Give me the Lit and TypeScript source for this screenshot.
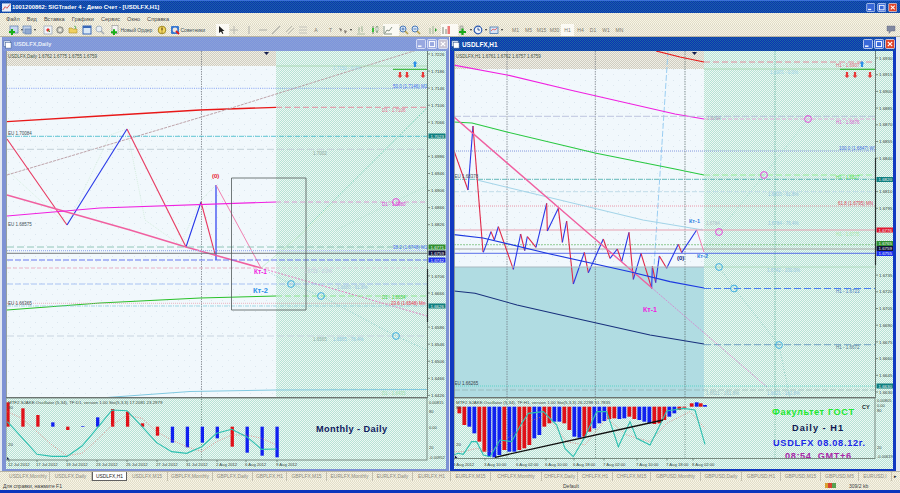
import { LitElement, css, html, svg } from 'lit';
import { customElement } from 'lit/decorators.js';

type Pt = number[];
type Line = { p: Pt[]; c: string; w?: number; d?: string };
type Label = [number, number, string, string, number?, number?];
type Pane = {
  x: number;
  w: number;
  split: number;
  axis: number;
  stripEnd: number;
  strip: string;
  lower?: number;
  axisDark: [number, number];
  ticks: [number, string][];
  tags: [number, string, string][];
  verts: [number, string][];
  lines: Line[];
  labels: Label[];
  rings: [number, number, string][];
  arrows: { up: number; down: number[]; bar: number };
};

const F = '"Liberation Sans", Arial, sans-serif';
const Z = (ox: number, oy: number, pts: Pt[]) => pts.map(([x, y]) => [ox + x / 3, oy + y / 3]);
const H = (y: number, a: number, b: number, c: string, w = 0.8, d = '') => ({ p: [[a, y], [b, y]], c, w, d });

const leftTicks: [number, string][] = [];
for (let i = 0; i < 21; i++) {
  leftTicks.push([54 + i * 17.07, (1.7226 - i * 0.004).toFixed(4)]);
}
const rightTicks: [number, string][] = [];
for (let i = 0; i < 21; i++) {
  rightTicks.push([58 + i * 16.7, (1.693 - i * 0.0015).toFixed(4)]);
}

const leftPane: Pane = {
  x: 6,
  w: 440,
  split: 276,
  axis: 427,
  stripEnd: 66,
  strip: 'USDLFX,Daily  1.6762 1.6775 1.6755 1.6759',
  axisDark: [269, 322],
  ticks: leftTicks,
  tags: [
    [136, '1.7023', '#0f7f7f'],
    [247, '1.6771', '#2f8f2f'],
    [253, '1.6759', '#12123a'],
    [260, '1.6742', '#1c30f0'],
    [306, '1.6626', '#0f7f7f'],
  ],
  verts: [[201.5, '#6a7078']],
  lines: [
    { p: [[7, 170], [67, 225], [110, 135], [127, 129], [145, 220], [180, 245], [201, 200], [216, 185]], c: '#c4e6cc', w: 0.6, d: '1 1' },
    { p: [[306, 228], [427, 108]], c: '#55c8a8', w: 0.7, d: '1.5 1.5' },
    { p: [[336, 230], [427, 186]], c: '#aadcc8', w: 0.6, d: '1.5 1.5' },
    { p: [[261, 268], [291, 284], [321, 296], [396, 336], [427, 350]], c: '#6cc0c0', w: 0.7, d: '1 2' },
    { p: [[261, 268], [306, 230], [336, 200]], c: '#b8e8c0', w: 0.7 },
    H(88.3, 7, 427, '#6a8cf0', 0.8, '1 1.2'),
    { p: [[7, 121.7], [100, 116], [200, 110], [276, 107.3]], c: '#e81818', w: 1.3 },
    H(107.3, 276, 427, '#e87a90', 0.8, '6 3'),
    { p: [[7, 175], [225, 110], [385, 60], [417, 50]], c: '#b89aa0', w: 0.9, d: '3 1' },
    H(136.3, 7, 427, '#38b8c8', 0.8, '5 1 1 1'),
    H(149.3, 7, 427, '#c4d0d8', 1, '7 3'),
    { p: [[7, 139], [67, 225]], c: '#e83860', w: 1.1 },
    { p: [[67, 225], [127, 129]], c: '#2838e8', w: 1.1 },
    { p: [[127, 129], [186, 247]], c: '#e83860', w: 1.1 },
    { p: [[186, 247], [201, 202]], c: '#2838e8', w: 1.1 },
    { p: [[201, 202], [215.5, 256]], c: '#e83860', w: 1.1 },
    { p: [[216, 260], [216, 185]], c: '#3848f0', w: 1.3 },
    { p: [[216, 185], [261, 268]], c: '#f080b0', w: 1 },
    { p: [[7, 195], [130, 230], [186, 247], [261, 268]], c: '#f060a0', w: 1.5 },
    { p: [[261, 268], [427, 316]], c: '#e860b8', w: 0.8, d: '2 1.5' },
    { p: [[7, 216], [100, 208], [276, 202]], c: '#f020e0', w: 1.2 },
    H(202, 276, 427, '#e090d0', 0.8, '5 3'),
    H(66, 276, 427, '#a8d8b0', 0.9),
    H(247, 7, 427, '#78b8a8', 0.8, '7 3'),
    H(250.7, 7, 427, '#a0b4f0', 1.2, '1 1'),
    H(253.3, 7, 427, '#686c70', 0.9),
    H(260, 7, 427, '#5a6cf0', 0.9, '6 2'),
    H(268, 7, 276, '#e8a0b8', 0.8, '4 2'),
    H(268, 276, 427, '#dcc8dc', 0.8, '4 2'),
    H(284, 7, 427, '#98b4f0', 0.8, '6 2'),
    { p: [[7, 310], [100, 303], [200, 298], [276, 296]], c: '#28c028', w: 1 },
    H(296, 276, 427, '#80e880', 0.8, '6 3'),
    H(303.3, 7, 427, '#e898a8', 0.7, '1 1'),
    H(306, 7, 427, '#80c8d8', 0.7, '4 1 1 1'),
    H(336, 7, 427, '#c8d4e0', 1, '7 3'),
    H(389.3, 330, 427, '#b0e0d0', 0.8, '7 3'),
    { p: [[100, 398], [190, 391.5], [276, 390], [427, 389.5]], c: '#80c8e0', w: 1 },
    { p: [[231.5, 178], [306, 178], [306, 310], [231.5, 310], [231.5, 178]], c: '#505858', w: 0.8 },
  ],
  labels: [
    [8, 135, 'EU 1.70084', '#405058'],
    [8, 226, 'EU 1.68575', '#405058'],
    [8, 304.5, 'EU 1.66365', '#405058'],
    [393, 88, '50.0 (1.7146) M1', '#4068f0'],
    [382, 111.5, 'D1 - 1.7106', '#e87090'],
    [333, 70, '1.7150 - 0.0%', '#a0d4e8'],
    [313, 155, '1.7002', '#90a8a0'],
    [382, 206, 'D1 - 1.6980', '#e040d8'],
    [393, 249, '38.2 (1.6748) M1', '#4068f0'],
    [304, 273, '1.6725 - 0.0%', '#c0c8e0'],
    [337, 289, '1.6680 - 61.8%', '#a0c4e0'],
    [382, 299, 'D1 - 1.6654', '#40d040'],
    [391, 304.5, '23.6 (1.6548) Mn', '#e83858'],
    [313, 341, '1.6565', '#90b0a8'],
    [333, 341, '1.6565 - 76.4%', '#90c8e0'],
    [382, 395, 'D1 - 1.6435', '#a0e0b0'],
    [212, 178, '(0)', '#e81830', 700, 6],
    [254, 274, 'Кт-1', '#f020e0', 700, 6.5],
    [253, 293, 'Кт-2', '#2c90e8', 700, 7.5],
  ],
  rings: [
    [396, 202, '#e838d8'],
    [291, 284, '#30a8e0'],
    [321, 296, '#30a8e0'],
    [396, 336, '#30a8e0'],
  ],
  arrows: { up: 415, down: [400, 407, 423], bar: 393 },
};

const zig = Z(450, 220, [
  [100, 97], [123, 35], [133, 60], [145, 20], [190, 148], [212, 42], [224, 92], [232, 50], [258, 82], [290, -50],
  [292, 33], [325, -35], [337, 67], [350, 3], [370, 192], [403, 97], [415, 158], [460, 57], [480, 115], [502, 87],
  [515, 125], [537, 37], [550, 178], [573, 100], [605, 205], [607, 138], [617, 188], [628, 108], [650, 145], [685, 73],
  [695, 98], [740, 30],
]);
const zigLines: Line[] = [
  { p: [[453, 148], [468, 190]], c: '#e02848', w: 1.1 },
  { p: [[468, 190], [473, 126]], c: '#2838e8', w: 1.1 },
  { p: [[473, 126], [483, 252]], c: '#e02848', w: 1.1 },
];
zig.forEach((pt, i) => {
  if (i < zig.length - 1) {
    zigLines.push({ p: [pt, zig[i + 1]], c: i % 2 ? '#e02848' : '#2838e8', w: 1.1 });
  }
});
zigLines.push({ p: [[696.7, 230], [704, 252]], c: '#f080b0', w: 1 });

const rightPane: Pane = {
  x: 454,
  w: 439,
  split: 704,
  axis: 875,
  stripEnd: 69,
  strip: 'USDLFX,H1  1.6761 1.6762 1.6757 1.6759',
  lower: 267,
  axisDark: [158, 265],
  ticks: rightTicks,
  tags: [
    [179.5, '1.6820', '#0f7f7f'],
    [230, '1.6776', '#e01830'],
    [243.5, '1.6765', '#2f8f2f'],
    [248.5, '1.6759', '#12123a'],
    [253.5, '1.6755', '#1c30f0'],
    [386, '1.6630', '#0f7f7f'],
  ],
  verts: [
    [507, '#6a7078'],
    [595.3, '#6a7078'],
    [685, '#5a6a68'],
    [775, '#58b098'],
  ],
  lines: [
    { p: [[704, 250], [764, 175], [808, 119]], c: '#8cd8c8', w: 0.7, d: '1 2' },
    { p: [[719, 267], [734, 288], [779, 345], [790, 398]], c: '#70c0b8', w: 0.7, d: '1 2' },
    { p: [[668, 51], [657, 220], [654, 267]], c: '#90c8f0', w: 0.9, d: '6 2' },
    { p: [[656, 51], [680, 57], [704, 62]], c: '#e81818', w: 1.2 },
    H(62, 704, 875, '#e87a90', 0.8, '6 3'),
    H(69, 704, 875, '#a8d8b0', 0.9),
    { p: [[453, 65], [507, 75], [570, 90], [675, 114], [704, 119]], c: '#f020e0', w: 1.2 },
    H(119, 704, 875, '#e8a0d8', 0.8, '4 2'),
    H(116.3, 454, 875, '#b0b8d8', 0.8, '7 2'),
    H(151, 454, 875, '#6c80d8', 0.8, '1 1'),
    { p: [[454, 122], [472, 123], [507, 132], [570, 147], [595, 153], [675, 169], [704, 175]], c: '#28c840', w: 1.1 },
    H(175, 704, 875, '#88f088', 0.8, '6 3'),
    H(179.3, 454, 875, '#40a8a8', 0.8, '5 1 1 1'),
    H(191.7, 454, 875, '#c0dce8', 1, '5 2'),
    H(206, 454, 875, '#e87088', 0.7, '1 1'),
    { p: [[477, 180], [643, 220], [703, 230]], c: '#a4d4e8', w: 1.1 },
    H(230, 454, 875, '#e8a0b0', 1),
    H(244.7, 454, 875, '#68b868', 0.7, '2 1'),
    H(249, 454, 875, '#a8a8a8', 1.2),
    H(253.3, 454, 875, '#4860e8', 0.9),
    ...zigLines,
    { p: [[454, 117], [573, 220], [652, 288]], c: '#f060a0', w: 1.4 },
    { p: [[652, 288], [767, 387]], c: '#e070c8', w: 0.7, d: '2 1' },
    H(267, 454, 704, '#a8b8c0', 1),
    H(267, 704, 875, '#a8d8b8', 0.8),
    { p: [[454, 234.7], [483, 238], [550, 254], [631, 272], [670, 281.7], [704, 288]], c: '#1c38e0', w: 1.2 },
    H(288.5, 704, 875, '#3870f0', 0.9, '7 3'),
    { p: [[454, 291], [475, 293.3], [517, 305], [583, 320], [650, 335], [704, 344]], c: '#18307c', w: 1.1 },
    H(344.7, 704, 875, '#6898c0', 0.9, '7 3'),
    H(386, 454, 875, '#48d0c0', 0.8, '1 1'),
    H(390, 454, 875, '#8aa8a8', 0.6, '6 2'),
  ],
  labels: [
    [836, 67, 'H1 - 1.6907', '#e86880'],
    [770, 74, '1.6901 - 0.0%', '#a0d4e8'],
    [707, 120, '1.6894', '#98a8b8'],
    [836, 124, 'H1 - 1.6876', '#e060d0'],
    [839, 150, '100.0 (1.6847) W1', '#4068e0'],
    [836, 179, 'H1 - 1.6827', '#50e050'],
    [454.5, 178, 'EU 1.68378', '#405058'],
    [768, 196, '1.6810 - 61.8%', '#98c8e0'],
    [838, 205, '61.8 (1.6795) MN', '#e04058'],
    [706, 225, '1.6784', '#b0c0c8'],
    [768, 225, '1.6784 - 76.4%', '#98c8e0'],
    [836, 236, 'H1 - 1.6775', '#a8e8a8'],
    [767, 272, '1.6742 - 100.0%', '#98c8e0'],
    [836, 293, 'H1 - 1.6723', '#4878c0'],
    [836, 349, 'H1 - 1.6672', '#507890'],
    [454.5, 385, 'EU 1.66265', '#304048'],
    [706, 395, '1.6621 - 161.8%', '#98c0c8'],
    [767, 395, '1.6621 - 161.8%', '#98c8e0'],
    [689, 223, 'Кт-1', '#2c80e0', 700, 5.5],
    [697, 258, 'Кт-2', '#2c80e0', 700, 5.5],
    [677, 260, '(0)', '#102080', 700, 6],
    [643, 312, 'Кт-1', '#f020e0', 700, 7],
  ],
  rings: [
    [808, 119, '#e838d8'],
    [764, 175, '#e838d8'],
    [719, 232, '#e838d8'],
    [719, 267, '#30a8e0'],
    [734, 288.5, '#30a8e0'],
    [779, 345, '#30a8e0'],
  ],
  arrows: { up: 862, down: [847, 855, 870], bar: 840 },
};

type Bar = [number, number, number, string];
const RED = '#e01018';
const BLUE = '#1020f0';

// left oscillator, positions read from a 3x crop
const leftBars: Bar[] = (
  [
    [22, 95, RED], [40, 95, RED], [60, 95, RED], [82, 95, BLUE], [95, 105, RED], [93, 95, BLUE], [67, 95, BLUE],
    [42, 95, RED], [50, 95, RED], [85, 95, RED], [95, 122, RED], [95, 143, BLUE], [95, 157, BLUE], [95, 143, BLUE],
    [95, 130, BLUE], [95, 155, RED], [95, 173, BLUE], [95, 182, BLUE], [95, 187, BLUE],
  ] as [number, number, string][]
).map(([a, b, c], i) => [8 + i * 14.95, 395 + a / 3, 395 + b / 3, c]);

const rightRuns: [number, string][] = [
  [2, RED], [2, BLUE], [2, RED], [3, BLUE], [1, RED], [2, BLUE], [3, RED], [2, BLUE], [2, RED], [2, BLUE], [2, RED],
  [2, BLUE], [2, RED], [3, BLUE], [2, RED], [2, BLUE], [2, RED], [3, BLUE], [3, RED], [2, BLUE], [2, RED],
];
const rightDepth = [
  55, 90, 95, 115, 140, 170, 185, 187, 180, 165, 170, 170, 165, 160, 150, 130, 120, 95, 85, 80, 80, 85, 105, 125, 128,
  125, 110, 100, 85, 78, 72, 70, 72, 70, 65, 72, 75, 80, 85, 87, 85, 75, 65, 55, 45, 38,
];
const rightColors = rightRuns.flatMap(([n, c]) => Array(n).fill(c) as string[]);
const rightBars: Bar[] = rightDepth.map((d, i) => [
  450 + (28 + i * 15) / 3,
  395 + 35 / 3,
  395 + d / 3,
  rightColors[i] ?? RED,
]);
rightBars.push(
  [691.7, 403.3, 406.7, RED],
  [696.7, 402.3, 406.7, BLUE],
  [700.7, 403.3, 406.7, RED],
  [705, 405, 406.7, BLUE],
);

const indicators = [
  {
    x: 6,
    w: 440,
    axis: 427,
    top: 399,
    bottom: 460,
    barW: 3.3,
    title: 'MTF2.SJAKE.Oscillator (5,34), TF:D1, version 1.00  Sto(5,3,3) 17.2081 23.2979',
    bars: leftBars,
    verts: [[201.5, '#4a6860']] as [number, string][],
    main: Z(0, 395, [
      [22, 80], [66, 128], [111, 178], [156, 184], [201, 184], [246, 153], [291, 100], [336, 45], [381, 47], [426, 95],
      [470, 143], [515, 170], [560, 175], [605, 155], [650, 115], [695, 103], [740, 125], [785, 163], [830, 162],
    ]),
    signal: Z(0, 395, [
      [22, 50], [66, 70], [111, 110], [156, 150], [201, 182], [246, 175], [291, 135], [336, 90], [381, 60], [426, 70],
      [470, 110], [515, 135], [560, 155], [605, 170], [650, 140], [695, 120], [740, 120], [785, 130], [830, 150],
    ]),
    left: [[8, 409, '80'], [8, 446, '20']] as [number, number, string][],
    right: [[402, '0.00815'], [411, '80'], [427, '0.00'], [447, '20'], [457, '-0.00952']] as [number, string][],
    dates: [
      [8, '12 Jul 2012'], [36, '17 Jul 2012'], [66, '19 Jul 2012'], [96, '23 Jul 2012'], [126, '25 Jul 2012'],
      [156, '27 Jul 2012'], [186, '31 Jul 2012'], [216, '2 Aug 2012'], [245, '6 Aug 2012'], [276, '9 Aug 2012'],
    ] as [number, string][],
    notes: [[316, 431.5, 'Monthly - Daily', '#102060', 71]] as [number, number, string, string, number][],
  },
  {
    x: 454,
    w: 439,
    axis: 875,
    top: 399,
    bottom: 458.5,
    barW: 3.8,
    title: 'MTF2.SJAKE.Oscillator (5,34), TF:H1, version 1.00  Sto(5,3,3) 26.2298 51.7835',
    bars: rightBars,
    verts: [[507, '#4a6860'], [595.5, '#4a6860'], [685, '#4a6860'], [775, '#4aa088']] as [number, string][],
    main: Z(450, 395, [
      [10, 180], [25, 175], [40, 178], [65, 140], [80, 140], [100, 180], [120, 185], [150, 135], [185, 140], [215, 85],
      [235, 55], [280, 50], [320, 90], [345, 160], [370, 185], [405, 125], [440, 50], [470, 50], [505, 155], [540, 80],
      [560, 130], [600, 150], [630, 90], [650, 48], [700, 40], [735, 45], [765, 148],
    ]),
    signal: Z(450, 395, [
      [10, 170], [40, 170], [80, 160], [120, 170], [185, 120], [235, 80], [290, 60], [350, 140], [405, 150], [470, 70],
      [530, 120], [600, 140], [650, 85], [720, 50], [765, 100],
    ]),
    left: [[456, 409, '80'], [456, 446, '20']] as [number, number, string][],
    right: [[400, '0.00805'], [405, '0.00'], [410.5, '80'], [447, '20'], [456, '-0.00619']] as [number, string][],
    dates: [
      [453, '3 Aug 2012'], [484, '3 Aug 10:00'], [516, '6 Aug 02:00'], [545, '6 Aug 10:00'], [573, '6 Aug 18:00'],
      [603, '7 Aug 02:00'], [636, '7 Aug 10:00'], [666, '7 Aug 18:00'], [692, '8 Aug 02:00'],
    ] as [number, string][],
    notes: [
      [772, 415, 'Факультет ГОСТ', '#20e830', 82],
      [792, 430.5, 'Daily - H1', '#101850', 51],
      [773, 445.5, 'USDLFX 08.08.12г.', '#1c28e8', 92],
      [785, 459, '08:54\u00a0\u00a0GMT+6', '#a828a8', 66],
    ] as [number, number, string, string, number][],
  },
];

const tabs: [string, number][] = [
  ['USDLFX,Monthly', 43], ['USDLFX,Daily', 42], ['USDLFX,H1', 35], ['USDLFX,M15', 41], ['GBPLFX,Monthly', 45],
  ['GBPLFX,Daily', 40], ['GBPLFX,H1', 34], ['GBPLFX,M15', 40], ['EURLFX,Monthly', 46], ['EURLFX,Daily', 40],
  ['EURLFX,H1', 38], ['EURLFX,M15', 40], ['CHFLFX,Monthly', 51], ['CHFLFX,Daily', 36], ['CHFLFX,H1', 35],
  ['CHFLFX,M15', 38], ['GBPUSD,Monthly', 50], ['GBPUSD,Daily', 41], ['GBPUSD,H1', 39], ['GBPUSD,M15', 40],
  ['GBPUSD,M5', 38], ['EURUSD,I', 33],
];

const menus = ['Файл', 'Вид', 'Вставка', 'Графики', 'Сервис', 'Окно', 'Справка'];

const icons: Record<string, unknown> = {
  newc: svg`<rect x="1" y="1" width="8" height="7" fill="#c8d8f0" stroke="#5878a8" stroke-width=".7"/><path d="M0 7h6M3 4v6" stroke="#18b018" stroke-width="2"/>`,
  prof: svg`<rect x="1" y="1" width="8" height="7" fill="#c0d0e8" stroke="#6080b0" stroke-width=".7"/><rect x="3" y="4" width="6" height="5" fill="#90a8d0" stroke="#6080b0" stroke-width=".6"/>`,
  star: svg`<rect x="1" y="1" width="8" height="8" fill="#f0f4f8" stroke="#8898b0" stroke-width=".6"/><path d="M3 5l2-2 2 2-2 2z" fill="#e83030"/><path d="M5 5l2 2" stroke="#30a030"/>`,
  gear: svg`<circle cx="5" cy="5" r="3.2" fill="#c8c8c0" stroke="#808078"/><circle cx="5" cy="5" r="1.2" fill="#f4f0e0"/>`,
  folder: svg`<path d="M1 8V3h3l1 1h4v4z" fill="#f0d060" stroke="#b09030" stroke-width=".6"/><path d="M6 1l2 1-1 2" stroke="#30a030" fill="none" stroke-width=".7"/>`,
  win: svg`<rect x="1" y="1" width="8" height="8" fill="#d8e8f8" stroke="#3868b8"/><rect x="1" y="1" width="8" height="2" fill="#3868b8"/>`,
  zoom: svg`<circle cx="4" cy="4" r="3" fill="#e8eef4" stroke="#a8b4c0"/><path d="M6 6l3 3" stroke="#a0a8b0" stroke-width="1.4"/>`,
  order: svg`<rect x="2" y="0.5" width="6" height="8" fill="#f4f4f4" stroke="#909090" stroke-width=".6"/><path d="M1 7.2h6M4 4.2v6" stroke="#18b018" stroke-width="2"/>`,
  clock: svg`<circle cx="5" cy="5" r="3.8" fill="#f4d860" stroke="#a08820"/><path d="M5 2.5v3" stroke="#402000"/><circle cx="5" cy="7" r=".5" fill="#402000"/>`,
  expert: svg`<rect x="1" y="1" width="8" height="8" rx="1" fill="#3878d0"/><circle cx="5" cy="5" r="2.4" fill="#f0e8e0"/><path d="M6 6l3 3" stroke="#e02020" stroke-width="2"/>`,
  cursor: svg`<path d="M3 1v7l2-1.6L6.4 9l1-.5L6.2 6H8.5z" fill="#202020"/>`,
  cross: svg`<path d="M5 1v8M1 5h8" stroke="#b8b8b0"/>`,
  vert: svg`<path d="M5 1v8" stroke="#b8b8b0" stroke-width="1.2"/>`,
  horz: svg`<path d="M1 5h8" stroke="#b8b8b0" stroke-width="1.2"/>`,
  diag: svg`<path d="M1 9l8-8" stroke="#b8b8b0" stroke-width="1.2"/>`,
  chan: svg`<path d="M1 7l6-6M3 9l6-6" stroke="#c0c0b8"/>`,
  fibo: svg`<path d="M1 2h8M1 5h8M1 8h8" stroke="#c4c4bc"/>`,
  shape: svg`<path d="M1 3l3 1-1 3zM6 5l3 1-2 3z" fill="#807870"/>`,
  bars: svg`<path d="M3 2v6M6 1v6M2 5h1M3 4h1M5 3h1M6 5h1M1 9h8" stroke="#a0b498" stroke-width=".8"/>`,
  candle: svg`<path d="M3 1v8" stroke="#688868"/><rect x="2" y="3" width="2" height="4" fill="#38c038"/><path d="M7 1v7" stroke="#688868"/><rect x="6" y="2" width="2" height="4" fill="#f0f0f0" stroke="#507850" stroke-width=".4"/>`,
  line: svg`<path d="M1 9V1M1 9h8M2 8l2-3 2 1 3-4" stroke="#687868" fill="none" stroke-width=".8"/>`,
  plus: svg`<circle cx="4" cy="4" r="3" fill="#d8e8f8" stroke="#4878b8"/><path d="M2.5 4h3M4 2.5v3" stroke="#2858a0" stroke-width=".7"/><path d="M6 6l3 3" stroke="#b09840" stroke-width="1.4"/>`,
  minus: svg`<circle cx="4" cy="4" r="3" fill="#d8e8f8" stroke="#4878b8"/><path d="M2.5 4h3" stroke="#2858a0" stroke-width=".7"/><path d="M6 6l3 3" stroke="#b09840" stroke-width="1.4"/>`,
  shift: svg`<path d="M2 9V3M5 9V1" stroke="#a0b498"/><path d="M7 3l2 2-2 2z" fill="#30a030"/>`,
  scale: svg`<path d="M2 9V2M5 9V4" stroke="#808878"/><rect x="6.5" y="1" width="2.5" height="8" fill="#e84040" opacity=".7"/>`,
  addi: svg`<path d="M2 1h3v7H2z" fill="#d0d0c8" stroke="#808078" stroke-width=".5"/><path d="M1 7h7M4.5 3.5v7" stroke="#18a818" stroke-width="2.2"/>`,
  period: svg`<circle cx="5" cy="5" r="3.8" fill="#f0f4fc" stroke="#2858b0" stroke-width="1.2"/><path d="M5 2.6V5h2" stroke="#103880" stroke-width=".8" fill="none"/>`,
  tmpl: svg`<rect x="1" y="2" width="8" height="6.5" fill="#d8e4f4" stroke="#4878b0" stroke-width=".8"/><path d="M2 6l2-2 2 1 2-2" stroke="#e04040" fill="none" stroke-width=".7"/>`,
  chat: svg`<path d="M1 1h8v5H5L3 8.5V6H1z" fill="#8088a0" stroke="#606880" stroke-width=".4"/>`,
};

const toolbar: { x: number; i?: string; t?: string; drop?: boolean; on?: boolean }[] = [
  { x: 9, i: 'newc', drop: true },
  { x: 22, i: 'prof', drop: true },
  { x: 43, i: 'star' },
  { x: 55, i: 'gear' },
  { x: 68, i: 'folder' },
  { x: 82, i: 'win' },
  { x: 95, i: 'zoom' },
  { x: 110, i: 'order', t: 'Новый Ордер' },
  { x: 157, i: 'clock' },
  { x: 170, i: 'expert', t: 'Советники' },
  { x: 216, i: 'cursor', on: true },
  { x: 229, i: 'cross' },
  { x: 244, i: 'vert' },
  { x: 258, i: 'horz' },
  { x: 271, i: 'diag' },
  { x: 285, i: 'chan' },
  { x: 298, i: 'fibo' },
  { x: 309, t: 'A' },
  { x: 323, t: 'T' },
  { x: 338, i: 'shape', drop: true },
  { x: 356, i: 'bars' },
  { x: 370, i: 'candle' },
  { x: 383, i: 'line', on: true },
  { x: 399, i: 'plus' },
  { x: 411, i: 'minus' },
  { x: 428, i: 'shift' },
  { x: 441, i: 'scale', on: true },
  { x: 458, i: 'addi', drop: true },
  { x: 473, i: 'period', drop: true },
  { x: 489, i: 'tmpl', drop: true },
  { x: 509, t: 'M1' },
  { x: 522, t: 'M5' },
  { x: 535, t: 'M15' },
  { x: 548, t: 'M30' },
  { x: 561, t: 'H1', on: true },
  { x: 574, t: 'H4' },
  { x: 587, t: 'D1' },
  { x: 599, t: 'W1' },
  { x: 613, t: 'MN' },
  { x: 626 },
  { x: 886, i: 'chat' },
  { x: 898 },
];

const fillDefs = svg`<defs>
  <pattern id="gd" width="2" height="2" patternUnits="userSpaceOnUse">
    <rect width="2" height="2" fill="#b6e2d5"/><rect width="1" height="1" fill="#eef8f4"/><rect x="1" y="1" width="1" height="1" fill="#eef8f4"/>
  </pattern>
  <pattern id="pl" width="11" height="11" patternUnits="userSpaceOnUse">
    <rect width="11" height="11" fill="#f1f8fc"/><rect x="2" y="3" width="1" height="1" fill="#dbe6ee"/><rect x="8" y="8" width="1" height="1" fill="#dfe9f0"/>
  </pattern>
  <pattern id="st" width="2" height="2" patternUnits="userSpaceOnUse">
    <rect width="2" height="2" fill="#cfcdc0"/><rect width="1" height="1" fill="#f0eee6"/><rect x="1" y="1" width="1" height="1" fill="#f0eee6"/>
  </pattern>
</defs>`;

const pts = (p: Pt[]) => p.map((q) => q.join(',')).join(' ');

@customElement('app-root')
export class AppRoot extends LitElement {
  static styles = css`
    :host {
      display: block;
      width: 900px;
      height: 493px;
      overflow: hidden;
      font-family: "Liberation Sans", Arial, sans-serif;
      background: #e4e9f2;
    }
    .shell {
      display: flex;
      flex-direction: column;
      height: 493px;
    }
    .title {
      height: 13px;
      flex: none;
      display: flex;
      align-items: center;
      padding-left: 2px;
      gap: 1px;
      color: #fff;
      font-size: 5.9px;
      font-weight: 700;
      background: repeating-conic-gradient(#0c2eb6 0 25%, #1a68a0 0 50%) 0 0 / 2px 2px;
      border-top: 1px solid #3a70d8;
      box-sizing: border-box;
    }
    .title .grow { flex: 1; }
    .ctrls {
      display: flex;
      gap: 1.5px;
      padding-right: 3px;
    }
    .ctl {
      width: 9.5px;
      height: 9px;
      display: block;
    }
    .menu {
      height: 11px;
      flex: none;
      display: flex;
      align-items: center;
      gap: 7px;
      padding-left: 6px;
      font-size: 5.6px;
      color: #484848;
      background: repeating-conic-gradient(#f6f3e6 0 25%, #e2dec8 0 50%) 0 0 / 2px 2px;
    }
    .tools {
      height: 12px;
      flex: none;
      display: flex;
      align-items: center;
      font-size: 5px;
      color: #807c70;
      background: repeating-conic-gradient(#f6f3e6 0 25%, #dedac6 0 50%) 0 0 / 2px 2px;
      border-bottom: 1px solid #b8b4a4;
      box-sizing: content-box;
    }
    .tool {
      height: 12px;
      display: flex;
      align-items: center;
      gap: 0.5px;
      box-sizing: border-box;
      white-space: nowrap;
    }
    .tool.text { justify-content: center; }
    .tool.on { background: #fbfaf4; }
    .tool.dark { color: #405058; }
    .tool svg { width: 10px; height: 10px; flex: none; }
    .drop {
      width: 0;
      height: 0;
      border: 1.5px solid transparent;
      border-top: 2px solid #303030;
      border-bottom: 0;
      margin-left: 1px;
    }
    .mdi {
      flex: 1;
      display: flex;
      gap: 1px;
      padding: 0 0 0 2px;
      min-height: 0;
    }
    .win {
      display: flex;
      flex-direction: column;
      box-sizing: border-box;
      width: 447px;
      height: 434px;
      border-style: solid;
      border-width: 0 3px 2px 4px;
      border-color: #7e92d4;
    }
    .win.active {
      width: 446px;
      border-color: #1038c0;
    }
    .win-title {
      height: 14px;
      flex: none;
      display: flex;
      align-items: center;
      gap: 2px;
      margin: 0 -2px 0 -3px;
      color: #e8eef8;
      font-size: 5.6px;
      font-weight: 700;
      background: repeating-conic-gradient(#7c94dc 0 25%, #8aa0d8 0 50%) 0 0 / 2px 2px;
    }
    .win.active .win-title {
      color: #fff;
      font-size: 6.4px;
      background: repeating-conic-gradient(#0c2eb6 0 25%, #1a68a0 0 50%) 0 0 / 2px 2px;
    }
    .win-title .grow { flex: 1; }
    .win-title .ctrls { padding-right: 0; gap: 1px; }
    .win-title .ctl { width: 10px; height: 10px; }
    .pane { display: block; }
    .tabs {
      height: 10px;
      flex: none;
      display: flex;
      padding-left: 7px;
      font-size: 4.9px;
      color: #8c8a80;
      background: repeating-conic-gradient(#f6f3e6 0 25%, #e2dec8 0 50%) 0 0 / 2px 2px;
      border-top: 1px solid #b8b4a4;
      box-sizing: border-box;
    }
    .tab {
      display: flex;
      align-items: center;
      justify-content: center;
      white-space: nowrap;
      overflow: hidden;
      box-sizing: border-box;
      border-right: 1px solid #c4c0b0;
    }
    .tab.on {
      background: #fff;
      color: #202020;
      border: 1px solid #606060;
      border-top: 0;
    }
    .more {
      margin-left: 2px;
      font-size: 5px;
      color: #202020;
      line-height: 9px;
    }
    .status {
      height: 9px;
      flex: none;
      display: flex;
      align-items: center;
      font-size: 5px;
      color: #404040;
      padding-left: 3px;
      background: repeating-conic-gradient(#f6f3e6 0 25%, #e2dec8 0 50%) 0 0 / 2px 2px;
    }
    .status .hint { width: 560px; }
    .status .pro { width: 262px; }
    .meter {
      width: 11px;
      height: 5px;
      margin-right: 13px;
      background: linear-gradient(90deg, #d8a030 0 30%, #d84030 30% 60%, #58a050 60%);
    }
    .edge {
      height: 3px;
      flex: none;
      background: #0c36bc;
    }
  `;

  private ctrl(kind: string, dim: boolean) {
    const fill = kind === 'x' ? (dim ? '#c8c4d4' : '#e04428') : dim ? '#98a8e0' : '#3868d8';
    return html`<svg class="ctl" viewBox="0 0 10 10">
      <rect x=".5" y=".5" width="9" height="9" rx="1" fill=${fill} stroke="#f0f4ff" stroke-width=".7"></rect>
      ${kind === 'min' ? svg`<rect x="2" y="6.5" width="3.5" height="1.4" fill="#fff"/>` : ''}
      ${kind === 'max' ? svg`<rect x="2.4" y="2.6" width="5.2" height="5" fill="none" stroke="#fff"/>` : ''}
      ${kind === 'x' ? svg`<path d="M2.8 2.8l4.4 4.4M7.2 2.8l-4.4 4.4" stroke="#fff" stroke-width="1.2"/>` : ''}
    </svg>`;
  }

  private lineEl(l: Line) {
    return svg`<polyline points=${pts(l.p)} fill="none" stroke=${l.c} stroke-width=${l.w ?? 0.8} stroke-dasharray=${l.d ?? 'none'} />`;
  }

  private text(x: number, y: number, t: string, c: string, size = 4.5, weight = 400) {
    return svg`<text x=${x} y=${y} fill=${c} font-size=${size} font-weight=${weight} font-family=${F}>${t}</text>`;
  }

  private renderMain(p: Pane) {
    const end = 398;
    const lowerY = p.lower ?? end;
    // the tags sit on top of the scale, so labels right under them are left out
    const ticks = p.ticks.filter(([y]) => !p.tags.some(([ty]) => Math.abs(ty - y) < 5.5));
    return html`<svg class="pane" width=${p.w} height="347" viewBox="${p.x} 51 ${p.w} 347">
      ${fillDefs}
      <rect x=${p.x} y="51" width=${p.w} height="347" fill="url(#gd)"></rect>
      <rect x=${p.x} y="51" width=${p.split - p.x} height="347" fill="url(#pl)"></rect>
      <rect x=${p.x} y="51" width=${p.split - p.x} height=${p.stripEnd - 51} fill="url(#st)"></rect>
      ${p.lower ? svg`<rect x=${p.x} y=${lowerY} width=${p.split - p.x} height=${end - lowerY} fill="#b0dce2"/>` : ''}
      ${p.verts.map(([x, c]) => svg`<line x1=${x} x2=${x} y1="51" y2=${end} stroke=${c} stroke-width=".7" stroke-dasharray="1.5 1"/>`)}
      ${p.lines.map((l) => this.lineEl(l))}
      ${p.rings.map(([x, y, c]) => svg`<circle cx=${x} cy=${y} r="3.4" fill="none" stroke=${c} stroke-width=".9"/>`)}
      <line x1=${p.arrows.bar} x2=${p.axis} y1="69.3" y2="69.3" stroke="#20b020" stroke-width="1"></line>
      <path d="M${p.arrows.up} 61l2.5 2.6h-1.4V67h-2.2v-3.4h-1.4z" fill="#2c90e8"></path>
      ${p.arrows.down.map((x) => svg`<path d="M${x} 78l-2.5-2.6h1.4V72h2.2v3.4h1.4z" fill="#e83838"/>`)}
      <path d="M${p.split - 12} 52h5l-2.5 3z" fill="#101848"></path>
      ${this.text(p.x + 2, 57.5, p.strip, '#405040')}
      ${p.labels.map(([x, y, t, c, w, s]) => this.text(x, y, t, c, s ?? 4.5, w ?? 400))}
      <rect x=${p.x} y="51" width=".8" height="347" fill="#808a88"></rect>
      <line x1=${p.x} x2=${p.axis} y1="397.5" y2="397.5" stroke="#6c7470" stroke-width="1.2"></line>
      <line x1=${p.axis + 0.5} x2=${p.axis + 0.5} y1="51" y2=${end} stroke="#6f8078" stroke-width="1"></line>
      <line x1=${p.axis + 0.5} x2=${p.axis + 0.5} y1=${p.axisDark[0]} y2=${p.axisDark[1]} stroke="#283030" stroke-width="1.2"></line>
      ${ticks.map(
        ([y, t]) => svg`<line x1=${p.axis + 1} x2=${p.axis + 3} y1=${y} y2=${y} stroke="#405048" stroke-width=".6"/>
          ${this.text(p.axis + 4, y + 1.6, t, '#384840', 4.4)}`,
      )}
      ${p.tags.map(
        ([y, t, c]) => svg`<rect x=${p.axis + 1.5} y=${y - 2.5} width="17" height="5" fill=${c}/>
          ${this.text(p.axis + 3.5, y + 1.6, t, '#f0f4f0', 4.4)}`,
      )}
    </svg>`;
  }

  private renderIndicator(o: (typeof indicators)[number]) {
    return html`<svg class="pane" width=${o.w} height="71" viewBox="${o.x} 398 ${o.w} 71">
      ${fillDefs}
      <rect x=${o.x} y="398" width=${o.w} height="71" fill="url(#gd)"></rect>
      ${o.verts.map(([x, c]) => svg`<line x1=${x} x2=${x} y1=${o.top} y2=${o.bottom} stroke=${c} stroke-width=".7" stroke-dasharray="1 1.5"/>`)}
      ${o.bars.map(([x, a, b, c]) => svg`<rect x=${x - o.barW / 2} y=${a} width=${o.barW} height=${b - a} fill=${c}/>`)}
      <polyline points=${pts(o.signal)} fill="none" stroke="#e86868" stroke-width=".7" stroke-dasharray="1 1.5"></polyline>
      <polyline points=${pts(o.main)} fill="none" stroke="#2cc0b0" stroke-width="1.1"></polyline>
      ${o.x > 100
        ? svg`<line x1="495" y1="457.3" x2="663" y2="420" stroke="#101010" stroke-width="1.3"/>${this.text(862, 409, 'CY', '#202830', 5.5, 700)}`
        : ''}
      ${this.text(o.x + 2, 403.5, o.title, '#384840', 4.4)}
      ${o.left.map(([x, y, t]) => this.text(x, y, t, '#384840', 4.4))}
      ${o.notes.map(
        ([x, y, t, c, len]) =>
          svg`<text x=${x} y=${y} fill=${c} font-size="9.2" font-weight="700" font-family=${F} textLength=${len} lengthAdjust="spacing">${t}</text>`,
      )}
      <rect x=${o.x} y=${o.top - 1} width=${o.axis - o.x} height=${o.bottom - o.top + 1} fill="none" stroke="#6f8078" stroke-width=".9"></rect>
      <path d="M${o.x + 1} ${o.bottom - 3}v2.6h2.6z" fill="#101848"></path>
      ${o.right.map(([y, t]) => this.text(o.axis + 2, y + 1.5, t, '#384840', 4))}
      ${o.dates.map(
        ([x, t]) => svg`<line x1=${x + 1} x2=${x + 1} y1=${o.bottom} y2=${o.bottom + 2} stroke="#405048" stroke-width=".6"/>
          ${this.text(x, 466.2, t, '#384840', 4.2)}`,
      )}
    </svg>`;
  }

  private renderWindow(name: string, active: boolean, p: Pane, ind: (typeof indicators)[number]) {
    return html`<section class="win ${active ? 'active' : ''}">
      <div class="win-title">
        <svg width="9" height="9" viewBox="0 0 10 10">
          <rect x="1" y="1" width="7" height="6" fill="#e8f0ff" stroke="#406090" stroke-width=".6"></rect>
          <rect x="3" y="3" width="6" height="6" fill="#fff" stroke="#406090" stroke-width=".6"></rect>
        </svg>
        <span>${name}</span><span class="grow"></span>
        <div class="ctrls">${this.ctrl('min', !active)}${this.ctrl('max', !active)}${this.ctrl('x', !active)}</div>
      </div>
      ${this.renderMain(p)} ${this.renderIndicator(ind)}
    </section>`;
  }

  render() {
    return html`<div class="shell">
      <header class="title">
        <svg width="9" height="9" viewBox="0 0 11 10">
          <rect width="11" height="10" fill="#e8eef8"></rect>
          <path d="M1 8l3-4 2 2 4-5" stroke="#d03030" fill="none"></path>
        </svg>
        <span>1001200862: SIGTrader 4 - Демо Счет - [USDLFX,H1]</span><span class="grow"></span>
        <div class="ctrls">${this.ctrl('min', false)}${this.ctrl('max', false)}${this.ctrl('x', false)}</div>
      </header>
      <nav class="menu">${menus.map((m) => html`<span>${m}</span>`)}</nav>
      <div class="tools">
        ${toolbar.slice(0, -1).map(
          (t, i) => html`<div
            class="tool ${t.on ? 'on' : ''} ${t.i && t.t ? 'dark' : ''} ${!t.i && t.t ? 'text' : ''}"
            style="width:${toolbar[i + 1].x - t.x}px;margin-left:${i === 0 ? t.x : 0}px"
          >
            ${t.i ? html`<svg viewBox="0 0 10 10">${icons[t.i]}</svg>` : ''} ${t.t ? html`<span>${t.t}</span>` : ''}
            ${t.drop ? html`<i class="drop"></i>` : ''}
          </div>`,
        )}
      </div>
      <main class="mdi">
        ${this.renderWindow('USDLFX,Daily', false, leftPane, indicators[0])}
        ${this.renderWindow('USDLFX,H1', true, rightPane, indicators[1])}
      </main>
      <div class="tabs">
        ${tabs.map(
          ([t, w]) => html`<div class="tab ${t === 'USDLFX,H1' ? 'on' : ''}" style="width:${w}px">${t}</div>`,
        )}
        <span class="more">▸</span>
      </div>
      <footer class="status">
        <span class="hint">Для справки, нажмите F1</span>
        <span class="pro">Default</span>
        <i class="meter"></i>
        <span>309/2 kb</span>
      </footer>
      <div class="edge"></div>
    </div>`;
  }
}
